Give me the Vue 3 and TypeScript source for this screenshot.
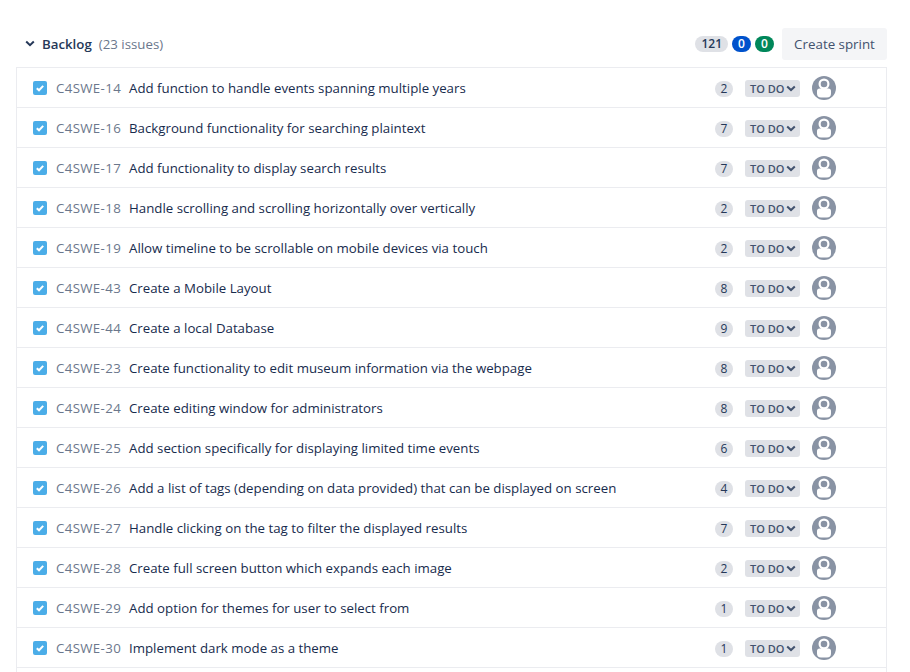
<script setup lang="ts">
interface Issue {
  key: string
  summary: string
  points: number
}

const issues: Issue[] = [
  { key: 'C4SWE-14', summary: 'Add function to handle events spanning multiple years', points: 2 },
  { key: 'C4SWE-16', summary: 'Background functionality for searching plaintext', points: 7 },
  { key: 'C4SWE-17', summary: 'Add functionality to display search results', points: 7 },
  { key: 'C4SWE-18', summary: 'Handle scrolling and scrolling horizontally over vertically', points: 2 },
  { key: 'C4SWE-19', summary: 'Allow timeline to be scrollable on mobile devices via touch', points: 2 },
  { key: 'C4SWE-43', summary: 'Create a Mobile Layout', points: 8 },
  { key: 'C4SWE-44', summary: 'Create a local Database', points: 9 },
  { key: 'C4SWE-23', summary: 'Create functionality to edit museum information via the webpage', points: 8 },
  { key: 'C4SWE-24', summary: 'Create editing window for administrators', points: 8 },
  { key: 'C4SWE-25', summary: 'Add section specifically for displaying limited time events', points: 6 },
  { key: 'C4SWE-26', summary: 'Add a list of tags (depending on data provided) that can be displayed on screen', points: 4 },
  { key: 'C4SWE-27', summary: 'Handle clicking on the tag to filter the displayed results', points: 7 },
  { key: 'C4SWE-28', summary: 'Create full screen button which expands each image', points: 2 },
  { key: 'C4SWE-29', summary: 'Add option for themes for user to select from', points: 1 },
  { key: 'C4SWE-30', summary: 'Implement dark mode as a theme', points: 1 },
]
</script>

<template>
  <div class="page">
    <div class="header">
      <svg class="chevron" width="10" height="8" viewBox="0 0 10 8" aria-hidden="true">
        <path d="M1.2 1.6 5 5.2l3.8-3.6" fill="none" stroke="#253858" stroke-width="2" />
      </svg>
      <span class="title">Backlog</span>
      <span class="count">(23 issues)</span>
      <div class="badges">
        <span class="badge grey">121</span>
        <span class="badge blue">0</span>
        <span class="badge green">0</span>
      </div>
      <button class="create">Create sprint</button>
    </div>

    <div class="list">
      <div v-for="issue in issues" :key="issue.key" class="row">
        <svg class="type" width="14" height="14" viewBox="0 0 14 14" aria-hidden="true">
          <rect width="14" height="14" rx="2" fill="#4bade8" />
          <path d="M3.8 7.2 6 9.3l4.2-4.4" fill="none" stroke="#fff" stroke-width="2" />
        </svg>
        <span class="key">{{ issue.key }}</span>
        <span class="summary">{{ issue.summary }}</span>
        <span class="points">{{ issue.points }}</span>
        <span class="status">
          TO DO
          <svg width="10" height="7" viewBox="0 0 10 7" aria-hidden="true">
            <path d="M1.2 1.4 5 5l3.8-3.6" fill="none" stroke="#42526e" stroke-width="2" />
          </svg>
        </span>
        <svg class="avatar" width="24" height="24" viewBox="0 0 24 24" aria-hidden="true">
          <circle cx="12" cy="12" r="12" fill="#8993a4" />
          <circle cx="12" cy="8" r="4.400" fill="none" stroke="#fff" stroke-width="2.200" />
          <path d="M5 15a2.600 2.600 0 0 1 2.600-2.600h8.800A2.600 2.600 0 0 1 19 15v2.400a4 4 0 0 1-4 4H9a4 4 0 0 1-4-4z" fill="#fff" />
        </svg>
      </div>
    </div>
  </div>
</template>

<style scoped>
.page {
  padding: 28px 23px 0 16px;
  font-family: "Open Sans", "Noto Sans", sans-serif;
  font-size: 13.27px;
  color: #172b4d;
  height: 672px;
  box-sizing: border-box;
  overflow: hidden;
}

.header {
  display: flex;
  align-items: center;
  height: 32px;
  margin-bottom: 7px;
  padding-left: 9px;
}

.chevron {
  margin-right: 7px;
}

.title {
  font-weight: 600;
  color: #253858;
}

.count {
  margin-left: 7px;
  color: #6b778c;
}

.badges {
  margin-left: auto;
  display: flex;
  gap: 4px;
  margin-right: 8px;
}

.badge {
  height: 16px;
  line-height: 16px;
  min-width: 7px;
  padding: 0 6px;
  border-radius: 8px;
  font-size: 12px;
  font-weight: 600;
  text-align: center;
}

.grey {
  background: #dfe1e6;
  color: #253858;
}

.blue {
  background: #0052cc;
  color: #fff;
}

.green {
  background: #00875a;
  color: #fff;
}

.create {
  width: 105px;
  height: 32px;
  border: 0;
  border-radius: 3px;
  background: #f4f5f7;
  color: #42526e;
  font: inherit;
  font-size: 13.35px;
  padding: 0;
}

.list {
  border: 1px solid #ebecf0;
  border-bottom: 0;
  width: 871px;
  min-height: 640px;
  box-sizing: border-box;
}

.row {
  display: flex;
  align-items: center;
  height: 40px;
  box-sizing: border-box;
  border-bottom: 1px solid #ebecf0;
  padding-top: 1px;
  padding-left: 16px;
}

.type {
  flex: none;
  margin-right: 9px;
}

.key {
  color: #6b778c;
  width: 73px;
  flex: none;
  letter-spacing: 0.35px;
}

.summary {
  flex: 1;
  white-space: nowrap;
}

.points {
  width: 18px;
  height: 16px;
  line-height: 16px;
  border-radius: 8px;
  background: #dfe1e6;
  color: #253858;
  font-size: 12px;
  text-align: center;
  margin-top: 1px;
  margin-right: 12px;
}

.status {
  display: flex;
  align-items: center;
  gap: 2px;
  width: 55px;
  height: 17px;
  box-sizing: border-box;
  padding-left: 5px;
  border-radius: 3px;
  background: #dfe1e6;
  color: #42526e;
  font-size: 11px;
  font-weight: 600;
  white-space: nowrap;
  margin-top: 1px;
  margin-right: 12px;
}

.avatar {
  flex: none;
  margin-right: 50px;
}
</style>
